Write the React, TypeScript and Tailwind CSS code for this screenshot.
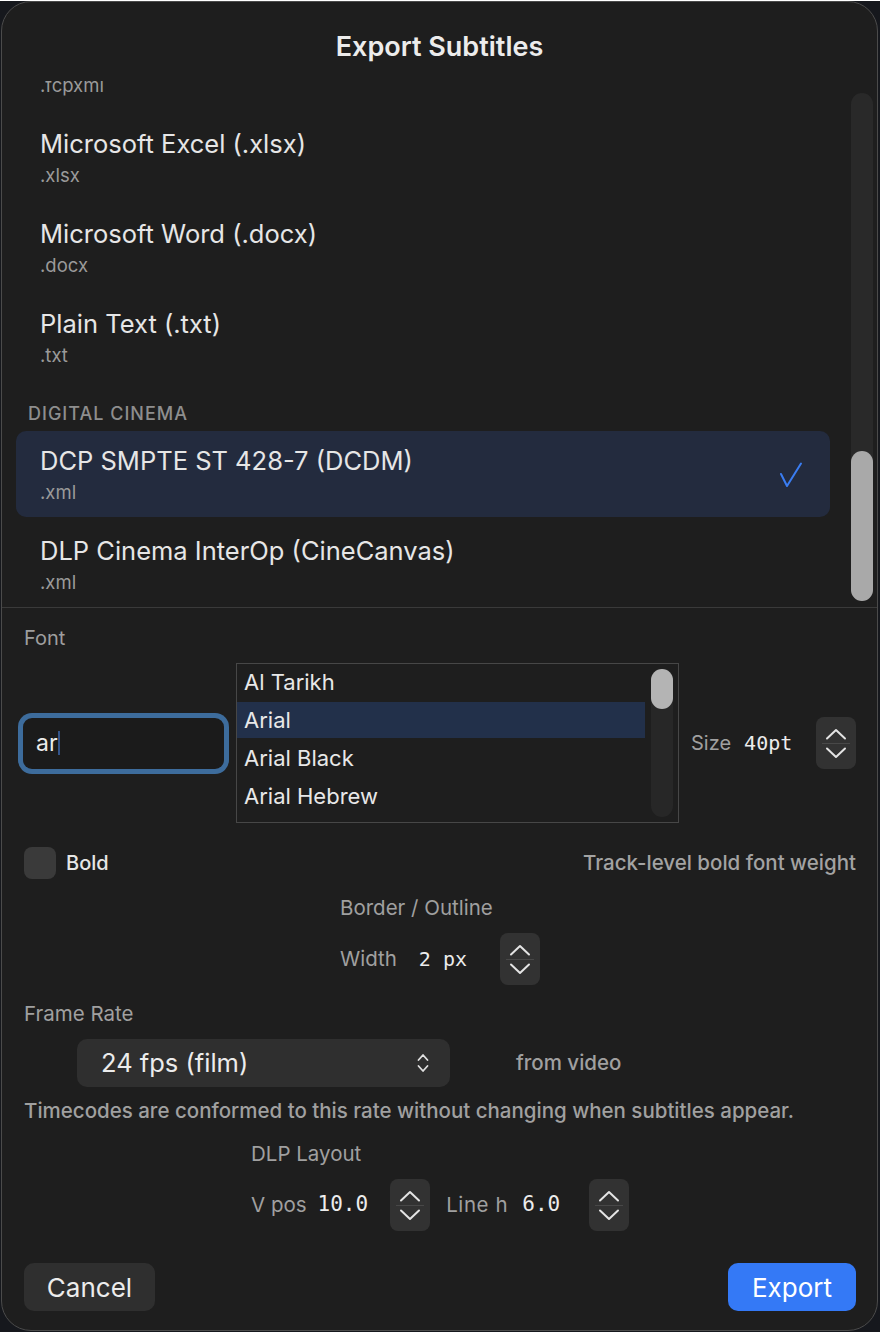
import React from 'react';

type Format = { name: string; ext: string };

const SANS = "font-['Inter','Noto_Sans',sans-serif]";
const MONO = "font-['DejaVu_Sans_Mono','Liberation_Mono',monospace]";

const TEXT_FORMATS: Format[] = [
  { name: 'Final Cut Pro XML (.fcpxml)', ext: '.fcpxml' },
  { name: 'Microsoft Excel (.xlsx)', ext: '.xlsx' },
  { name: 'Microsoft Word (.docx)', ext: '.docx' },
  { name: 'Plain Text (.txt)', ext: '.txt' },
];

const FONTS = ['Al Tarikh', 'Arial', 'Arial Black', 'Arial Hebrew'];

const ChevronUp = () => (
  <svg width="22" height="12" viewBox="0 0 22 12" fill="none">
    <path d="M2 10.5 L11 2 L20 10.5" stroke="#e4e4e4" strokeWidth="2" strokeLinecap="round" strokeLinejoin="round" />
  </svg>
);

const ChevronDown = () => (
  <svg width="22" height="12" viewBox="0 0 22 12" fill="none">
    <path d="M2 1.5 L11 10 L20 1.5" stroke="#e4e4e4" strokeWidth="2" strokeLinecap="round" strokeLinejoin="round" />
  </svg>
);

// Small up/down stepper used next to numeric values
const Stepper = () => (
  <div className="w-10 h-[52px] rounded-lg bg-[#323232] flex flex-col items-center justify-center gap-[3px]">
    <ChevronUp />
    <div className="w-7 h-px bg-[#484848]" />
    <ChevronDown />
  </div>
);

const FormatRow = ({ format, selected, className = '' }: { format: Format; selected?: boolean; className?: string }) => (
  <div
    className={`h-[86px] w-[814px] ml-[14px] px-6 pt-[14px] rounded-[10px] flex justify-between ${
      selected ? 'bg-[#232b3e]' : ''
    } ${className}`}
  >
    <div>
      <div className="text-[25.5px] leading-8 text-[#e6e6e6]">{format.name}</div>
      <div className="text-[18.5px] leading-6 mt-[3px] text-[#9a9a9a]">{format.ext}</div>
    </div>
    {selected && (
      <svg width="24" height="26" viewBox="0 0 24 26" fill="none" className="mt-[17px] mr-[3px]">
        <path d="M2 12 L8 24 L22 1.5" stroke="#3a7df2" strokeWidth="2" strokeLinecap="round" strokeLinejoin="round" />
      </svg>
    )}
  </div>
);

export default function App() {
  return (
    <div className={`w-[880px] h-[1332px] bg-[#16181d] ${SANS}`}>
      <div className="ml-px mt-px w-[877px] h-[1330px] rounded-[30px] border border-[#4b4b4b] bg-[#1e1e1e] overflow-hidden flex flex-col">
        {/* Title */}
        <div className="h-[79px] pt-[29px] text-center text-[27px] leading-8 font-semibold text-[#ececec]">
          Export Subtitles
        </div>

        {/* Format list, scrolled down to the cinema section */}
        <div className="relative h-[526px] overflow-hidden">
          <div className="-mt-[57px] flex flex-col">
            {TEXT_FORMATS.map((f, i) => (
              <FormatRow key={f.ext} format={f} className={i < TEXT_FORMATS.length - 1 ? 'mb-1' : ''} />
            ))}
            <div className="h-[51px] pt-[22px] pl-[26px] text-[18px] leading-6 font-medium tracking-[1px] text-[#8e8e8e]">
              DIGITAL CINEMA
            </div>
            <FormatRow format={{ name: 'DCP SMPTE ST 428-7 (DCDM)', ext: '.xml' }} selected className="mb-1" />
            <FormatRow format={{ name: 'DLP Cinema InterOp (CineCanvas)', ext: '.xml' }} />
          </div>
          {/* scrollbar */}
          <div className="absolute right-[4px] top-[12px] w-[22px] h-[508px] rounded-full bg-[#292929]">
            <div className="absolute bottom-0 w-[22px] h-[150px] rounded-full bg-[#a9a9a9]" />
          </div>
        </div>

        {/* Options */}
        <div className="border-t border-[#3a3a3a] pl-[22px] pr-[21px] pt-[18px] flex flex-col flex-1">
          <div className="text-[20px] leading-6 text-[#9e9e9e]">Font</div>

          <div className="mt-[13px] h-[160px] flex items-center">
            <div className="ml-[-1px] w-[201px] h-[51px] rounded-[9px] bg-[#1b1b1b] ring-[5px] ring-[#3d6c9c] flex items-center pl-[13px]">
              <span className="text-[23px] text-[#ececec]">ar</span>
              <span className="w-[2px] h-[24px] bg-[#33548a]" />
            </div>

            <div className="ml-3 w-[443px] h-[160px] border border-[#474747] relative">
              <div className="flex flex-col gap-[2px] w-[408px]">
                {FONTS.map(name => (
                  <div
                    key={name}
                    className={`h-9 pl-[7px] flex items-center text-[22px] text-[#e8e8e8] ${
                      name === 'Arial' ? 'bg-[#22304a]' : ''
                    }`}
                  >
                    {name}
                  </div>
                ))}
              </div>
              <div className="absolute right-[5px] top-[5px] w-[22px] h-[148px] rounded-full bg-[#272727]">
                <div className="w-[22px] h-[40px] rounded-full bg-[#b4b4b4]" />
              </div>
            </div>

            <div className="ml-3 text-[20px] text-[#a0a0a0]">Size</div>
            <div className={`ml-[13px] text-[20px] text-[#ececec] ${MONO}`}>40pt</div>
            <div className="ml-auto">
              <Stepper />
            </div>
          </div>

          <div className="mt-6 h-8 flex items-center">
            <div className="w-8 h-8 rounded-lg bg-[#3a3a3a]" />
            <div className="ml-[10px] text-[20px] font-medium text-[#e6e6e6]">Bold</div>
            <div className="ml-auto text-[20.5px] font-medium text-[#a3a3a3]">Track-level bold font weight</div>
          </div>

          <div className="mt-[17px] self-center flex flex-col w-[200px]">
            <div className="text-[20.5px] leading-6 text-[#a0a0a0]">Border / Outline</div>
            <div className="mt-[13px] flex items-center">
              <span className="text-[20.5px] text-[#a0a0a0]">Width</span>
              <span className={`ml-[22px] text-[20px] text-[#ececec] ${MONO}`}>2 px</span>
              <div className="ml-auto">
                <Stepper />
              </div>
            </div>
          </div>

          <div className="mt-[17px] text-[20.5px] leading-6 text-[#a0a0a0]">Frame Rate</div>
          <div className="mt-[13px] flex items-center">
            <div className="ml-[53px] w-[373px] h-12 rounded-[10px] bg-[#2f2f2f] flex items-center pl-6 pr-5">
              <span className="text-[25.5px] text-[#ececec]">24 fps (film)</span>
              <svg width="14" height="22" viewBox="0 0 14 22" fill="none" className="ml-auto">
                <path d="M2.5 8 L7 3 L11.5 8" stroke="#e0e0e0" strokeWidth="1.8" strokeLinecap="round" strokeLinejoin="round" />
                <path d="M2.5 14 L7 19 L11.5 14" stroke="#e0e0e0" strokeWidth="1.8" strokeLinecap="round" strokeLinejoin="round" />
              </svg>
            </div>
            <span className="ml-[66px] text-[20.5px] font-medium text-[#a0a0a0]">from video</span>
          </div>

          <div className="mt-3 text-[20.5px] leading-6 font-medium text-[#a0a0a0] whitespace-nowrap">
            Timecodes are conformed to this rate without changing when subtitles appear.
          </div>

          <div className="mt-[19px] self-center w-[378px] flex flex-col">
            <div className="text-[20.5px] leading-6 text-[#a0a0a0]">DLP Layout</div>
            <div className="mt-[13px] flex items-center">
              <span className="text-[20.5px] text-[#a0a0a0]">V pos</span>
              <span className={`ml-[11px] text-[21px] text-[#ececec] ${MONO}`}>10.0</span>
              <div className="ml-[22px]">
                <Stepper />
              </div>
              <span className="ml-4 text-[20.5px] text-[#a0a0a0] tracking-[0.6px]">Line h</span>
              <span className={`ml-[14px] text-[21px] text-[#ececec] ${MONO}`}>6.0</span>
              <div className="ml-auto">
                <Stepper />
              </div>
            </div>
          </div>

          <div className="mt-8 flex justify-between">
            <button className="w-[131px] h-12 rounded-[10px] bg-[#2f2f2f] text-[26px] text-[#ececec]">Cancel</button>
            <button className="w-[128px] h-12 rounded-[10px] bg-[#3479f6] text-[26px] text-white">Export</button>
          </div>
        </div>
      </div>
    </div>
  );
}
